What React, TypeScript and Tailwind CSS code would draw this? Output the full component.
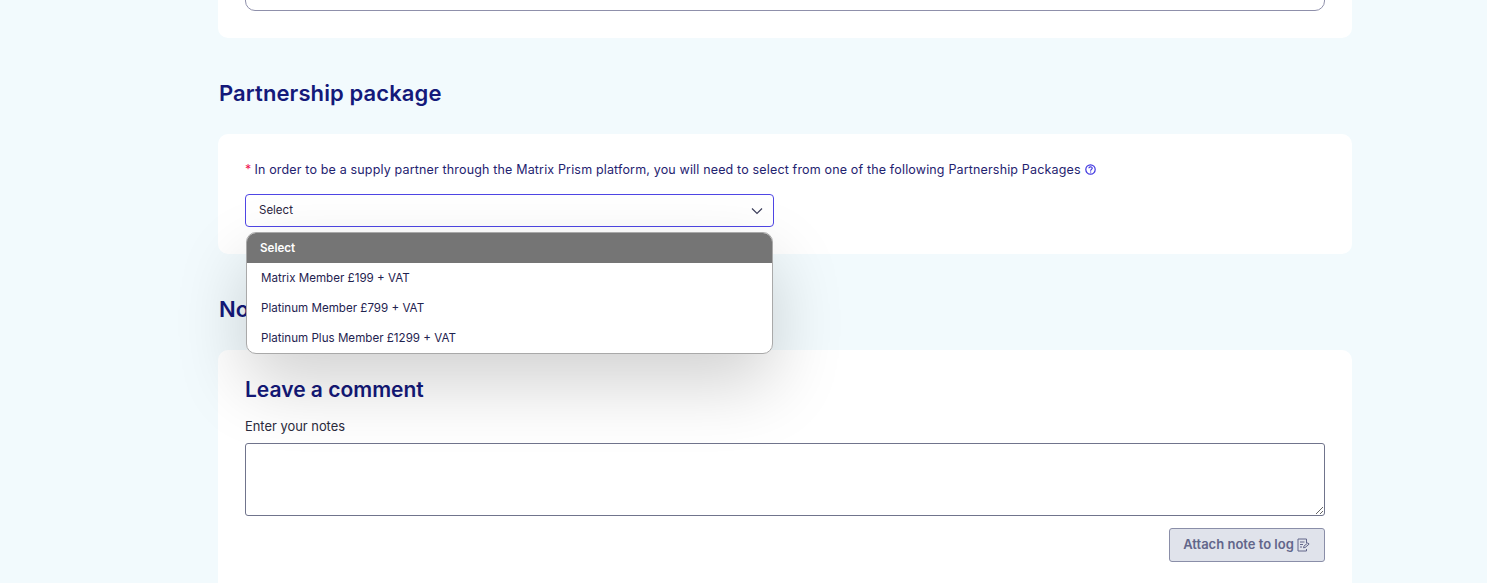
const font = "font-['Inter','Noto_Sans',sans-serif]"

const options = ['Matrix Member £199 + VAT', 'Platinum Member £799 + VAT', 'Platinum Plus Member £1299 + VAT']

function HelpIcon() {
  return (
    <svg width="11" height="11" viewBox="0 0 11 11" fill="none" stroke="#3f36e0" strokeWidth="1.2">
      <circle cx="5.5" cy="5.5" r="4.7" />
      <path d="M3.9 4.3c0-2 3.3-2 3.3-.1 0 1.1-1.5 1.2-1.6 2.5" />
      <path d="M5.6 7.6v1" />
    </svg>
  )
}

function NoteIcon() {
  return (
    <svg width="13" height="14" viewBox="0 0 13 14" fill="none" stroke="#62668a" strokeWidth="1">
      <path d="M9.5 5V1H1v12h8.5v-2" />
      <path d="M3 4h4.5M3 6.5h3M3 9h2" />
      <path d="M6.5 9.8l.4-1.6 4-3.4 1.2 1.3-4 3.4z" />
    </svg>
  )
}

export default function App() {
  return (
    <div className={`${font} h-[583px] overflow-hidden bg-[#f2fafd]`}>
      <div className="ml-[218px] flex w-[1134px] flex-col">
        {/* Card cut off by the scroll position */}
        <div className="flex h-[38px] flex-col justify-end rounded-b-[10px] bg-white px-[27px] pb-[27px]">
          <div className="h-[40px] shrink-0 rounded-b-[10px] border border-[#8f90ab]" />
        </div>

        <h2 className="mt-[41px] ml-px h-[55px] text-[22px] leading-[29px] font-semibold tracking-[0.1px] text-[#14197a]">
          Partnership package
        </h2>

        {/* Partnership package */}
        <div className="relative h-[120px] rounded-[10px] bg-white px-[27px] pt-[27px]">
          <p className="flex items-center text-[12.5px] leading-[17px] tracking-[0.16px] text-[#1f2370]">
            <span className="mr-[3px] text-[#f0124f]">*</span>
            In order to be a supply partner through the Matrix Prism platform, you will need to select from one of the following Partnership Packages
            <span className="ml-[4px]">
              <HelpIcon />
            </span>
          </p>
          <div className="mt-4 flex h-[33px] w-[529px] items-center justify-between rounded-[4px] border border-[#4f46e5] pt-px pr-[10px] pl-[13px] text-[11.5px] text-[#2b2540]">
            Select
            <svg width="12" height="8" viewBox="0 0 12 8" fill="none" stroke="#3d3f5c" strokeWidth="1.2">
              <path d="M1 1.5l5 5 5-5" />
            </svg>
          </div>

          {/* Open dropdown */}
          <div className="absolute top-[98px] left-[28px] z-10 w-[527px] overflow-hidden rounded-[10px] border border-[#a9a9a9] bg-white text-[11.6px] text-[#1f2350] shadow-[0_30px_70px_0_rgba(0,0,0,0.18)]">
            <div className="flex h-[30px] items-center bg-[#757575] px-[13px] pt-px font-semibold text-white">Select</div>
            {options.map((o) => (
              <div key={o} className="flex h-[30px] items-center px-[14px] pt-px">
                {o}
              </div>
            ))}
          </div>
        </div>

        <h2 className="mt-[41px] ml-px h-[55px] text-[22px] leading-[29px] font-semibold text-[#14197a]">Notes</h2>

        {/* Notes */}
        <div className="rounded-[10px] bg-white px-[27px] pt-[27px] pb-10">
          <h3 className="text-[21px] leading-[26px] font-semibold text-[#14197a]">Leave a comment</h3>
          <label className="mt-[16px] block text-[12.9px] leading-[16px] text-[#2b2b3d]">Enter your notes</label>
          <textarea className="mt-[8px] block h-[73px] w-full rounded-[3px] border border-[#70748c] bg-white" />
          <div className="mt-3 flex justify-end">
            <button className="flex h-[34px] w-[156px] items-center justify-center gap-[3px] rounded-[3px] border border-[#8a8ea8] bg-[#e0e3eb] pr-px text-[13px] font-semibold text-[#62668a]">
              Attach note to log
              <NoteIcon />
            </button>
          </div>
        </div>
      </div>
    </div>
  )
}
